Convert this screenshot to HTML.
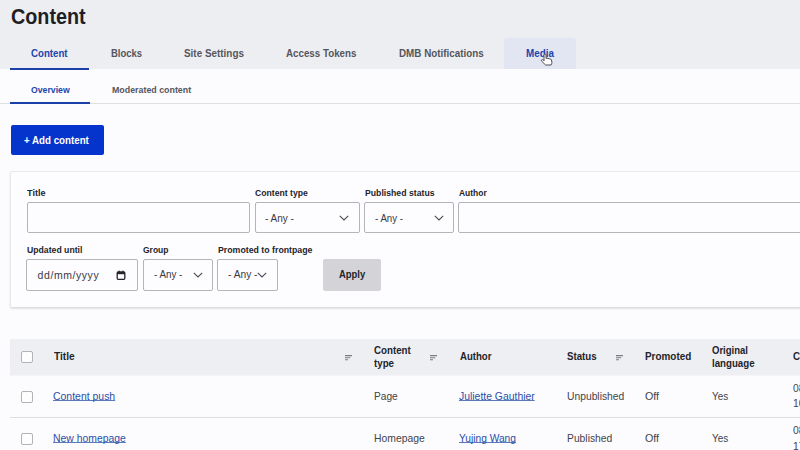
<!DOCTYPE html>
<html><head><meta charset="utf-8">
<style>
*{margin:0;padding:0;box-sizing:border-box}
html,body{width:800px;height:450px;overflow:hidden;background:#fcfbfe;font-family:"Liberation Sans",sans-serif;position:relative}
.t{position:absolute;white-space:nowrap;line-height:1;transform-origin:0 0}
.i{position:absolute}
.r{position:absolute}
.box{position:absolute;border:1px solid #b4b5ba;border-radius:2px;background:#fdfcff}
.cb{position:absolute;width:12px;height:12px;border:1px solid #b2b3b8;border-radius:2px;background:#fdfdfe}
</style></head><body>
<div class="r" style="left:0;top:0;width:800px;height:69px;background:#edeef2"></div>
<div class="r" style="left:504px;top:38px;width:72px;height:31px;background:#e2e6f2;border-radius:3px 3px 0 0"></div>
<div class="r" style="left:10px;top:68px;width:79px;height:2px;background:#1b41a8"></div>
<div class="r" style="left:0;top:103px;width:800px;height:1px;background:#dedfe3"></div>
<div class="r" style="left:10px;top:102px;width:80px;height:2px;background:#1b41a8"></div>
<div class="r" style="left:10.5px;top:125px;width:93.5px;height:30px;background:#0434cc;border-radius:2px"></div>
<div class="r" style="left:10px;top:171px;width:800px;height:137px;border:1px solid #e8e8ec;border-bottom-color:#dedee2;border-radius:2px;background:#fdfcff;box-shadow:0 1px 2px rgba(0,0,0,.11)"></div>
<div class="box" style="left:27px;top:202px;width:223px;height:31px"></div>
<div class="box" style="left:255px;top:202px;width:104.5px;height:31px"></div>
<svg class="i" style="left:338.8px;top:214.6px" width="10" height="6" viewBox="0 0 10 6"><path d="M.8.9L5 4.9 9.2.9" fill="none" stroke="#4a4b50" stroke-width="1.1"/></svg>
<div class="box" style="left:364px;top:202px;width:90px;height:31px"></div>
<svg class="i" style="left:433.8px;top:214.6px" width="10" height="6" viewBox="0 0 10 6"><path d="M.8.9L5 4.9 9.2.9" fill="none" stroke="#4a4b50" stroke-width="1.1"/></svg>
<div class="box" style="left:458px;top:202px;width:360px;height:31px"></div>
<div class="box" style="left:26px;top:259px;width:112px;height:32px"></div>
<svg class="i" style="left:116.3px;top:270px" width="10" height="10" viewBox="0 0 10 10"><rect x="1.2" y="2" width="7.6" height="7.3" rx="1" fill="none" stroke="#232429" stroke-width="1.3"/><rect x="1" y="2" width="8" height="2.2" fill="#232429"/><rect x="2.6" y=".6" width="1.1" height="1.8" fill="#232429"/><rect x="6.3" y=".6" width="1.1" height="1.8" fill="#232429"/></svg>
<div class="box" style="left:143px;top:259px;width:70px;height:32px"></div>
<svg class="i" style="left:192.8px;top:271.8px" width="10" height="6" viewBox="0 0 10 6"><path d="M.8.9L5 4.9 9.2.9" fill="none" stroke="#4a4b50" stroke-width="1.1"/></svg>
<div class="box" style="left:217px;top:259px;width:61px;height:32px"></div>
<svg class="i" style="left:257px;top:271.8px" width="10" height="6" viewBox="0 0 10 6"><path d="M.8.9L5 4.9 9.2.9" fill="none" stroke="#4a4b50" stroke-width="1.1"/></svg>
<div class="r" style="left:322.5px;top:259px;width:58px;height:32px;background:#d4d4d8;border-radius:2px"></div>
<div class="r" style="left:10px;top:339px;width:790px;height:36px;background:#eeeff3"></div>
<div class="r" style="left:10px;top:375px;width:790px;height:1px;background:#f5f5f8"></div>
<div class="cb" style="left:21px;top:351px"></div>
<svg class="i" style="left:345px;top:355px" width="8" height="6" viewBox="0 0 8 6"><path d="M0 .6h7M0 2.7h5.2M0 4.8h3" stroke="#7c7d83" stroke-width="1.1"/></svg>
<svg class="i" style="left:430px;top:355px" width="8" height="6" viewBox="0 0 8 6"><path d="M0 .6h7M0 2.7h5.2M0 4.8h3" stroke="#7c7d83" stroke-width="1.1"/></svg>
<svg class="i" style="left:616px;top:355px" width="8" height="6" viewBox="0 0 8 6"><path d="M0 .6h7M0 2.7h5.2M0 4.8h3" stroke="#7c7d83" stroke-width="1.1"/></svg>
<div class="cb" style="left:21px;top:391px"></div>
<div class="r" style="left:10px;top:417px;width:790px;height:1px;background:#dcdde1"></div>
<div class="cb" style="left:21px;top:433px"></div>
<div class="t" id="h1" style="left:11.00px;top:6.91px;font-size:21.5px;font-weight:bold;color:#1e1f24;transform:scaleX(0.9191);">Content</div>
<div class="t" id="t1" style="left:31.40px;top:48.80px;font-size:10.2px;font-weight:bold;color:#1c45ac;transform:scaleX(0.9505);">Content</div>
<div class="t" id="t2" style="left:110.60px;top:48.80px;font-size:10.2px;font-weight:bold;color:#55565b;transform:scaleX(0.9326);">Blocks</div>
<div class="t" id="t3" style="left:183.50px;top:48.80px;font-size:10.2px;font-weight:bold;color:#55565b;transform:scaleX(0.9715);">Site Settings</div>
<div class="t" id="t4" style="left:285.80px;top:48.80px;font-size:10.2px;font-weight:bold;color:#55565b;transform:scaleX(0.9586);">Access Tokens</div>
<div class="t" id="t5" style="left:398.50px;top:48.80px;font-size:10.2px;font-weight:bold;color:#55565b;transform:scaleX(0.9656);">DMB Notifications</div>
<div class="t" id="t6" style="left:525.90px;top:48.80px;font-size:10.2px;font-weight:bold;color:#1c45ac;transform:scaleX(0.9683);">Media</div>
<div class="t" id="s1" style="left:31.25px;top:86.00px;font-size:9.2px;font-weight:bold;color:#1c45ac;transform:scaleX(0.9465);">Overview</div>
<div class="t" id="s2" style="left:111.80px;top:86.00px;font-size:9.2px;font-weight:bold;color:#55565b;transform:scaleX(0.9624);">Moderated content</div>
<div class="t" id="btn" style="left:23.70px;top:135.80px;font-size:10px;font-weight:bold;color:#ffffff;transform:scaleX(0.9737);">+ Add content</div>
<div class="t" id="l1" style="left:27.00px;top:188.81px;font-size:9px;font-weight:bold;color:#232429;transform:scaleX(1.0076);">Title</div>
<div class="t" id="l2" style="left:255.20px;top:188.81px;font-size:9px;font-weight:bold;color:#232429;transform:scaleX(0.9602);">Content type</div>
<div class="t" id="l3" style="left:364.90px;top:188.81px;font-size:9px;font-weight:bold;color:#232429;transform:scaleX(0.9653);">Published status</div>
<div class="t" id="l4" style="left:459.20px;top:188.81px;font-size:9px;font-weight:bold;color:#232429;transform:scaleX(0.9398);">Author</div>
<div class="t" id="l5" style="left:26.80px;top:246.01px;font-size:9px;font-weight:bold;color:#232429;transform:scaleX(0.9633);">Updated until</div>
<div class="t" id="l6" style="left:143.30px;top:246.01px;font-size:9px;font-weight:bold;color:#232429;transform:scaleX(0.9444);">Group</div>
<div class="t" id="l7" style="left:217.50px;top:246.01px;font-size:9px;font-weight:bold;color:#232429;transform:scaleX(0.9740);">Promoted to frontpage</div>
<div class="t" id="a1" style="left:265.00px;top:212.60px;font-size:10.5px;font-weight:normal;color:#38393e;transform:scaleX(0.9491);">- Any -</div>
<div class="t" id="a2" style="left:374.90px;top:212.60px;font-size:10.5px;font-weight:normal;color:#38393e;transform:scaleX(0.9227);">- Any -</div>
<div class="t" id="dt" style="left:37.60px;top:269.71px;font-size:10.5px;font-weight:normal;color:#38393e;transform:scaleX(1.0000);letter-spacing:0.565px;">dd/mm/yyyy</div>
<div class="t" id="a3" style="left:153.60px;top:269.10px;font-size:10.5px;font-weight:normal;color:#38393e;transform:scaleX(0.9359);">- Any -</div>
<div class="t" id="a4" style="left:227.50px;top:269.10px;font-size:10.5px;font-weight:normal;color:#38393e;transform:scaleX(0.9722);">- Any -</div>
<div class="t" id="ap" style="left:338.75px;top:270.21px;font-size:10.2px;font-weight:bold;color:#232429;transform:scaleX(0.9257);">Apply</div>
<div class="t" id="h_title" style="left:53.90px;top:352.21px;font-size:10.2px;font-weight:bold;color:#232429;transform:scaleX(0.9996);">Title</div>
<div class="t" id="h_ct1" style="left:374.10px;top:345.90px;font-size:10.2px;font-weight:bold;color:#232429;transform:scaleX(0.9557);">Content</div>
<div class="t" id="h_ct2" style="left:374.10px;top:358.81px;font-size:10.2px;font-weight:bold;color:#232429;transform:scaleX(0.9559);">type</div>
<div class="t" id="h_au" style="left:459.50px;top:352.21px;font-size:10.2px;font-weight:bold;color:#232429;transform:scaleX(0.9430);">Author</div>
<div class="t" id="h_st" style="left:566.60px;top:352.21px;font-size:10.2px;font-weight:bold;color:#232429;transform:scaleX(0.9531);">Status</div>
<div class="t" id="h_pr" style="left:644.90px;top:352.21px;font-size:10.2px;font-weight:bold;color:#232429;transform:scaleX(0.9730);">Promoted</div>
<div class="t" id="h_or1" style="left:712.40px;top:345.90px;font-size:10.2px;font-weight:bold;color:#232429;transform:scaleX(0.9337);">Original</div>
<div class="t" id="h_or2" style="left:712.40px;top:358.81px;font-size:10.2px;font-weight:bold;color:#232429;transform:scaleX(0.9514);">language</div>
<div class="t" id="h_c" style="left:793.20px;top:352.21px;font-size:10.2px;font-weight:bold;color:#232429;transform:scaleX(0.9559);">Changed</div>
<div class="t" id="r1a" style="left:53.30px;top:390.60px;font-size:10.8px;font-weight:normal;color:#2a4fa8;transform:scaleX(0.9679);text-decoration:underline;text-decoration-skip-ink:none;text-underline-offset:0px;text-decoration-color:#5d79b9;">Content push</div>
<div class="t" id="r1b" style="left:373.75px;top:390.60px;font-size:10.8px;font-weight:normal;color:#424348;transform:scaleX(0.9418);">Page</div>
<div class="t" id="r1c" style="left:459.25px;top:390.60px;font-size:10.8px;font-weight:normal;color:#2a4fa8;transform:scaleX(0.9634);text-decoration:underline;text-decoration-skip-ink:none;text-underline-offset:0px;text-decoration-color:#5d79b9;">Juliette Gauthier</div>
<div class="t" id="r1d" style="left:566.60px;top:390.60px;font-size:10.8px;font-weight:normal;color:#424348;transform:scaleX(0.9542);">Unpublished</div>
<div class="t" id="r1e" style="left:644.90px;top:390.60px;font-size:10.8px;font-weight:normal;color:#424348;transform:scaleX(0.9891);">Off</div>
<div class="t" id="r1f" style="left:712.40px;top:390.60px;font-size:10.8px;font-weight:normal;color:#424348;transform:scaleX(0.9202);">Yes</div>
<div class="t" id="r1g" style="left:793.40px;top:383.01px;font-size:10.8px;font-weight:normal;color:#424348;transform:scaleX(0.9559);">08/10/2023</div>
<div class="t" id="r1h" style="left:793.40px;top:398.41px;font-size:10.8px;font-weight:normal;color:#424348;transform:scaleX(0.9559);">10:42</div>
<div class="t" id="r2a" style="left:53.30px;top:433.01px;font-size:10.8px;font-weight:normal;color:#2a4fa8;transform:scaleX(0.9623);text-decoration:underline;text-decoration-skip-ink:none;text-underline-offset:0px;text-decoration-color:#5d79b9;">New homepage</div>
<div class="t" id="r2b" style="left:373.75px;top:433.01px;font-size:10.8px;font-weight:normal;color:#424348;transform:scaleX(0.9610);">Homepage</div>
<div class="t" id="r2c" style="left:459.25px;top:433.01px;font-size:10.8px;font-weight:normal;color:#2a4fa8;transform:scaleX(0.9458);text-decoration:underline;text-decoration-skip-ink:none;text-underline-offset:0px;text-decoration-color:#5d79b9;">Yujing Wang</div>
<div class="t" id="r2d" style="left:566.60px;top:433.01px;font-size:10.8px;font-weight:normal;color:#424348;transform:scaleX(0.9559);">Published</div>
<div class="t" id="r2e" style="left:644.90px;top:433.01px;font-size:10.8px;font-weight:normal;color:#424348;transform:scaleX(0.9891);">Off</div>
<div class="t" id="r2f" style="left:712.40px;top:433.01px;font-size:10.8px;font-weight:normal;color:#424348;transform:scaleX(0.9202);">Yes</div>
<div class="t" id="r2g" style="left:793.40px;top:425.10px;font-size:10.8px;font-weight:normal;color:#424348;transform:scaleX(0.9559);">08/10/2023</div>
<div class="t" id="r2h" style="left:793.40px;top:440.60px;font-size:10.8px;font-weight:normal;color:#424348;transform:scaleX(0.9559);">17:05</div>
<svg class="i" style="left:539.5px;top:53.2px" width="14" height="13" viewBox="0 0 14 13"><path d="M4 2.2Q4 1 5 1T6 2.2V5.4Q7.3 4.7 8 5.6Q9.2 5.1 9.8 6.1Q10.9 5.8 11.4 6.8L11.9 9.2Q12 10.6 11 12H5.6L1.6 8.1Q1 7.3 1.8 6.8Q2.6 6.4 3.3 7.1L4 7.8Z" fill="#fff" stroke="#3a3b40" stroke-width=".9" stroke-linejoin="round"/></svg>
</body></html>
